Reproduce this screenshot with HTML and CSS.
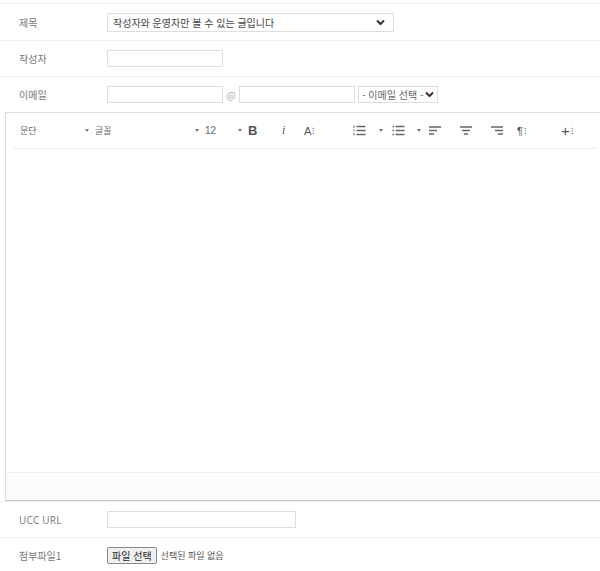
FILE: index.html
```html
<!DOCTYPE html>
<html lang="ko">
<head>
  <meta charset="UTF-8" />
  <meta name="viewport" content="width=device-width, initial-scale=1.0"/>
  <title>글쓰기</title>
  <link rel="stylesheet" href="styles.css">
</head>
<body>

<form class="write-form">
  <!-- 제목 -->
  <div class="row">
    <label class="label">제목</label>
    <div class="field">
      <div class="fake-select wide">
        <span>작성자와 운영자만 볼 수 있는 글입니다</span>
        <svg class="chev" width="9" height="7" viewBox="0 0 9 7"><path d="M1 1.5 L4.5 5 L8 1.5" fill="none" stroke="#333" stroke-width="2"/></svg>
      </div>
    </div>
  </div>

  <!-- 작성자 -->
  <div class="row">
    <label class="label">작성자</label>
    <div class="field">
      <input type="text" class="input short">
    </div>
  </div>

  <!-- 이메일 -->
  <div class="row">
    <label class="label">이메일</label>
    <div class="field">
      <input type="text" class="input short">
      <span class="at">@</span>
      <input type="text" class="input short">
      <div class="fake-select mail">
        <span>- 이메일 선택 -</span>
        <svg class="chev" width="9" height="7" viewBox="0 0 9 7"><path d="M1 1.5 L4.5 5 L8 1.5" fill="none" stroke="#333" stroke-width="2"/></svg>
      </div>
    </div>
  </div>

  <!-- 에디터 -->
  <div class="editor">
    <div class="toolbar">
      <span class="tool drop w-para">문단<i class="caret"></i></span>
      <span class="tool drop w-font">글꼴<i class="caret"></i></span>
      <span class="tool drop w-size">12<i class="caret"></i></span>
      <span class="tool w-b"><b>B</b></span>
      <span class="tool w-i"><em>i</em></span>
      <span class="tool w-a">A<span class="dots">⁝</span></span>
      <span class="tool drop w-ol">
        <svg width="13" height="11" viewBox="0 0 13 11"><path d="M1 0.5 V3 M1 4.5 V6.5 M1 8 V10.5" stroke="#666" stroke-width="1"/><path d="M3.5 1.5 H12.5 M3.5 5.5 H12.5 M3.5 9.5 H12.5" stroke="#666" stroke-width="1.3"/></svg>
        <i class="caret"></i>
      </span>
      <span class="tool drop w-ul">
        <svg width="13" height="11" viewBox="0 0 13 11"><path d="M0.5 1.5 H2 M0.5 5.5 H2 M0.5 9.5 H2" stroke="#666" stroke-width="1.3"/><path d="M3.5 1.5 H12.5 M3.5 5.5 H12.5 M3.5 9.5 H12.5" stroke="#666" stroke-width="1.3"/></svg>
        <i class="caret"></i>
      </span>
      <span class="tool w-al">
        <svg width="12" height="9" viewBox="0 0 12 9"><path d="M0 1 H12 M0 4.5 H8 M0 8 H5" stroke="#666" stroke-width="1.3"/></svg>
      </span>
      <span class="tool w-ac">
        <svg width="12" height="9" viewBox="0 0 12 9"><path d="M0 1 H12 M2 4.5 H10 M4 8 H8" stroke="#666" stroke-width="1.3"/></svg>
      </span>
      <span class="tool w-ar">
        <svg width="12" height="9" viewBox="0 0 12 9"><path d="M0 1 H12 M4 4.5 H12 M7 8 H12" stroke="#666" stroke-width="1.3"/></svg>
      </span>
      <span class="tool w-p">¶<span class="dots">⁝</span></span>
      <span class="tool w-plus">+<span class="dots">⁝</span></span>
    </div>
    <div class="editor-body"></div>
    <div class="editor-status"></div>
  </div>

  <!-- UCC URL -->
  <div class="row">
    <label class="label en">UCC URL</label>
    <div class="field">
      <input type="text" class="input long">
    </div>
  </div>

  <!-- 첨부파일 -->
  <div class="row">
    <label class="label">첨부파일1</label>
    <div class="field">
      <span class="file-btn">파일 선택</span>
      <span class="file-name">선택된 파일 없음</span>
    </div>
  </div>
</form>

</body>
</html>
```

FILE: styles.css
```css
body {
    margin: 0;
    background: #fff;
    font-family: "Noto Sans CJK KR", "Noto Sans", sans-serif;
    font-size: 11px;
    color: #333;
}

.write-form {
    padding-top: 3px;
}

/* 한 줄 */
.row {
    display: flex;
    align-items: center;
    border-top: 1px solid #eee;
    height: 35px;
}

.row:first-child {
    height: 36px;
}

.label {
    width: 88px;
    padding-left: 19px;
    color: #777;
    font-size: 10px;
}

.label.en {
    font-family: "Open Sans", sans-serif;
    letter-spacing: 0.2px;
}

.field {
    display: flex;
    align-items: center;
}

.input {
    box-sizing: border-box;
    height: 17px;
    border: 1px solid #ddd;
    margin: 0;
    padding: 0 4px;
    font-size: 11px;
    outline: none;
}

.input.short {
    width: 116px;
}

.input.long {
    width: 189px;
}

.at {
    width: 16px;
    text-align: center;
    color: #aaa;
    font-size: 10px;
}

.fake-select {
    box-sizing: border-box;
    display: flex;
    align-items: center;
    justify-content: space-between;
    height: 19px;
    border: 1px solid #ddd;
    padding: 0 8px 0 5px;
    font-size: 10px;
    color: #444;
}

.fake-select.wide {
    width: 287px;
}

.fake-select.mail {
    width: 80px;
    height: 17px;
    margin-left: 3px;
    padding: 0 3px 0 3px;
    color: #666;
}

/* 에디터 */
.editor {
    margin-left: 5px;
    border: 1px solid #ddd;
    border-right: none;
    border-bottom: 1px solid #c4c4c4;
}

.toolbar {
    display: flex;
    align-items: center;
    height: 35px;
    margin: 0 3px 0 7px;
    padding-left: 7px;
    border-bottom: 1px solid #eee;
    color: #666;
    font-size: 9px;
}

.tool {
    display: flex;
    align-items: center;
    box-sizing: border-box;
}

.tool.drop {
    justify-content: space-between;
    padding-right: 6px;
}

.caret {
    width: 0;
    height: 0;
    border-left: 2.5px solid transparent;
    border-right: 2.5px solid transparent;
    border-top: 3px solid #777;
}

.w-para { width: 75px; }
.w-font { width: 110px; }
.w-size { width: 43px; font-family: "Liberation Sans", sans-serif; font-size: 10px; }
.w-b { width: 33px; font-family: "Liberation Sans", sans-serif; font-size: 13px; color: #555; }
.w-i { width: 21px; padding-left: 1px; font-family: "Liberation Serif", serif; font-size: 12px; color: #555; }
.w-a { width: 48px; padding-left: 2px; font-family: "Liberation Sans", sans-serif; font-size: 11px; color: #555; }
.w-ol { width: 39px; padding-left: 3px; padding-right: 8px; }
.w-ul { width: 38px; padding-left: 3px; padding-right: 8px; }
.w-al { width: 32px; padding-left: 2px; }
.w-ac { width: 32px; padding-left: 1px; }
.w-ar { width: 24px; }
.w-p { width: 46px; padding-left: 2px; font-family: "Liberation Sans", sans-serif; font-size: 11px; color: #555; }
.w-plus { width: 30px; font-family: "Liberation Sans", sans-serif; font-size: 15px; color: #555; }

.dots {
    font-size: 9px;
    margin-left: 1px;
}

.editor-body {
    height: 323px;
}

.editor-status {
    height: 27px;
    background: #fcfcfc;
    border-top: 1px solid #eee;
}

/* 첨부파일 */
.file-btn {
    box-sizing: border-box;
    height: 17px;
    line-height: 15px;
    padding: 0 4px;
    border: 1px solid #888;
    background: #efefef;
    border-radius: 2px;
    font-size: 10px;
    color: #222;
}

.file-name {
    margin-left: 4px;
    font-size: 9px;
    color: #555;
}
```
